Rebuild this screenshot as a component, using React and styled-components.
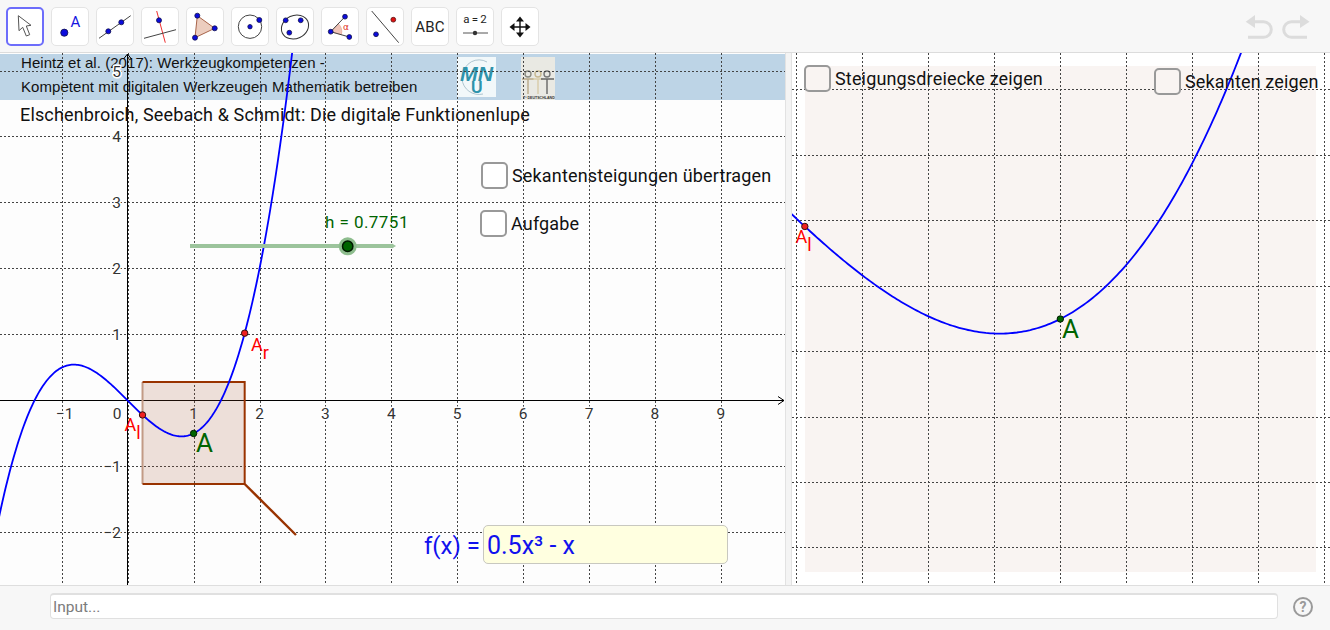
import React from 'react'
import styled, { createGlobalStyle } from 'styled-components'

const Global = createGlobalStyle`
  html, body { margin: 0; padding: 0; background: #fff; overflow: hidden; }
  body { font-family: Roboto, "Liberation Sans", sans-serif; }
`

const Page = styled.div`
  width: 1330px;
  height: 630px;
  display: flex;
  flex-direction: column;
`

const Toolbar = styled.div`
  height: 53px;
  flex: none;
  box-sizing: border-box;
  padding: 7px 20px 0 6px;
  display: flex;
  align-items: flex-start;
  gap: 7px;
  background: #f7f7f7;
  border-bottom: 1px solid #dcdcdc;
`

const ToolButton = styled.div`
  width: 38px;
  height: 39px;
  flex: none;
  box-sizing: border-box;
  display: flex;
  align-items: center;
  justify-content: center;
  background: #fff;
  border-radius: 5px;
  border: ${p => (p.$active ? '2px solid #6d6dfb' : '1px solid #e4e4e4')};
  font-size: 15px;
  color: #222;
  letter-spacing: 0.2px;
`

const ToolIcon = styled.svg`
  width: 38px;
  height: 38px;
  flex: none;
  display: block;
`

const History = styled.div`
  margin-left: auto;
  padding-top: 7px;
  display: flex;
  gap: 8px;
`

const Workspace = styled.div`
  height: 532px;
  flex: none;
  display: flex;
`

const Canvas = styled.div`
  position: relative;
  overflow: hidden;
  width: ${p => p.$width}px;
  flex: none;
  background: ${p => p.$bg};
`

const Splitter = styled.div`
  width: 7px;
  flex: none;
  box-sizing: border-box;
  background: #f4f4f4;
  border-left: 1px solid #e2e2e2;
  border-right: 1px solid #e2e2e2;
`

const Plot = styled.svg`
  position: absolute;
  left: 0;
  top: 0;
  display: block;
`

const Banner = styled.div`
  position: absolute;
  left: 0;
  top: 1px;
  width: 100%;
  height: 46px;
  box-sizing: border-box;
  padding: 1px 0 5px 21px;
  background: #bdd4e6;
  font-family: "Liberation Sans", Arial, sans-serif;
  font-size: 15px;
  letter-spacing: 0.055px;
  color: #111;
  display: flex;
  flex-direction: column;
  justify-content: space-between;
  line-height: 16px;
`

const Logo = styled.svg`
  position: absolute;
  top: 4px;
  left: ${p => p.$left}px;
  display: block;
`

const Credit = styled.div`
  position: absolute;
  left: 20px;
  top: 51px;
  font-size: 18px;
  line-height: 22px;
  letter-spacing: 0.15px;
  color: #111;
  white-space: nowrap;
`

const Option = styled.label`
  position: absolute;
  left: ${p => p.$left}px;
  top: ${p => p.$top}px;
  display: flex;
  align-items: center;
  gap: 4px;
  font-size: 18px;
  letter-spacing: 0.16px;
  color: #111;
  white-space: nowrap;
`

const OptionText = styled.span`
  padding-bottom: 1px;
`

const Box = styled.span`
  width: 27px;
  height: 27px;
  box-sizing: border-box;
  flex: none;
  border: 2px solid #999;
  border-radius: 5px;
  background: ${p => p.$bg};
`

const FormulaRow = styled.div`
  position: absolute;
  left: 424px;
  top: 472px;
  display: flex;
  align-items: center;
  gap: 3px;
  font-size: 24px;
  color: #1111ee;
  white-space: nowrap;
`

const FormulaInput = styled.div`
  width: 245px;
  height: 39px;
  box-sizing: border-box;
  padding: 2px 0 0 3px;
  display: flex;
  align-items: center;
  background: #ffffe0;
  border: 1px solid #c8c8c0;
  border-radius: 5px;
  font-size: 25px;
`

const FormulaLabel = styled.span`
  padding-top: 2px;
`

const InputBar = styled.div`
  flex: 1;
  box-sizing: border-box;
  display: flex;
  align-items: flex-start;
  padding: 7px 0 0 50px;
  background: #f7f7f7;
  border-top: 1px solid #dedede;
`

const InputField = styled.div`
  width: 1228px;
  height: 26px;
  box-sizing: border-box;
  padding-left: 2px;
  display: flex;
  align-items: center;
  background: #fff;
  border: 1px solid #e0e0e0;
  border-top-width: 2px;
  border-radius: 4px;
  font-size: 15.5px;
  color: #7c7c7c;
`

const Help = styled.svg`
  margin: 4px 0 0 15px;
  flex: none;
  display: block;
`

const BLUE = '#0b0bdc'
const DOT_STROKE = '#10104a'

const Dot = ({ x, y, r = 3, fill = BLUE, stroke = DOT_STROKE, width = 0.8 }) => (
  <circle cx={x} cy={y} r={r} fill={fill} stroke={stroke} strokeWidth={width} />
)

const tools = [
  {
    key: 'move',
    active: true,
    icon: (
      <polygon
        points="12.3,7.7 13,22.7 16.7,19.3 20.3,28 23.7,26.7 20.3,18 25,17.3"
        fill="#fff"
        stroke="#555"
        strokeWidth="1"
      />
    ),
  },
  {
    key: 'point',
    icon: (
      <>
        <Dot x={13.3} y={24.7} r={3.6} />
        <text x={19.5} y={18.7} fontFamily="Roboto, sans-serif" fontSize="15" fill="#1414e0">A</text>
      </>
    ),
  },
  {
    key: 'line',
    icon: (
      <>
        <line x1="3" y1="30.3" x2="34.7" y2="7.7" stroke="#444" strokeWidth="1" />
        <Dot x={12.3} y={23.3} r={2.5} />
        <Dot x={25.3} y={14.3} r={2.5} />
      </>
    ),
  },
  {
    key: 'perpendicular',
    icon: (
      <>
        <line x1="15.7" y1="3" x2="24.3" y2="34.7" stroke="#ee3030" strokeWidth="1" />
        <line x1="3" y1="30.3" x2="35" y2="21.7" stroke="#444" strokeWidth="1" />
        <Dot x={18} y={12.3} r={2.5} />
      </>
    ),
  },
  {
    key: 'polygon',
    icon: (
      <>
        <polygon points="11.3,7.7 28.7,20.3 9,29.7" fill="#eccdbf" stroke="#a8644a" strokeWidth="1" />
        <Dot x={11.3} y={7.7} r={2.5} />
        <Dot x={28.7} y={20.3} r={2.5} />
        <Dot x={9} y={29.7} r={2.5} />
      </>
    ),
  },
  {
    key: 'circle',
    icon: (
      <>
        <circle cx="19" cy="18.7" r="11.7" fill="none" stroke="#444" strokeWidth="1" />
        <Dot x={19} y={18.7} r={2.2} />
        <Dot x={28.3} y={12} r={2.5} />
      </>
    ),
  },
  {
    key: 'ellipse',
    icon: (
      <>
        <ellipse cx="19" cy="19" rx="14" ry="11.5" fill="none" stroke="#333" strokeWidth="1" transform="rotate(-25 19 19)" />
        <Dot x={9.7} y={12.3} r={2.4} />
        <Dot x={24.7} y={12.3} r={2.4} />
        <Dot x={13.3} y={24.7} r={2.4} />
      </>
    ),
  },
  {
    key: 'angle',
    icon: (
      <>
        <path d="M9.7 23.7 L17.3 15.7 A11 11 0 0 1 20.3 26.7 Z" fill="#f0c4b8" stroke="#e09a8a" strokeWidth="0.6" />
        <line x1="9.7" y1="23.7" x2="24" y2="8.7" stroke="#444" strokeWidth="1" />
        <line x1="9.7" y1="23.7" x2="28.3" y2="29" stroke="#444" strokeWidth="1" />
        <Dot x={9.7} y={23.7} r={2.4} />
        <Dot x={24} y={8.7} r={2.4} />
        <Dot x={28.3} y={29} r={2.4} />
        <text x={22} y={22} fontFamily="'DejaVu Sans', sans-serif" fontSize="9" fill="#e03020">α</text>
      </>
    ),
  },
  {
    key: 'reflect',
    icon: (
      <>
        <line x1="5.7" y1="3" x2="32.7" y2="34.7" stroke="#444" strokeWidth="1" />
        <Dot x={27.3} y={11.7} r={2.4} fill="#e01010" stroke="#501010" />
        <Dot x={10} y={26.3} r={2.4} />
      </>
    ),
  },
  { key: 'text', label: 'ABC' },
  {
    key: 'slider',
    icon: (
      <>
        <text x={19} y={15} textAnchor="middle" wordSpacing="-1" fontFamily="Roboto, sans-serif" fontSize="11.5" fill="#222">a = 2</text>
        <line x1="7" y1="25" x2="32" y2="25" stroke="#555" strokeWidth="1" />
        <circle cx="19" cy="25" r="2.2" fill="#333" />
      </>
    ),
  },
  {
    key: 'translate',
    icon: (
      <>
        <path d="M19 11 V27 M11 19 H27" stroke="#111" strokeWidth="1.4" />
        <path
          d="M19 8.5 L23 13.5 H15 Z M19 29.5 L23 24.5 H15 Z M8.5 19 L13.5 15 V23 Z M29.5 19 L24.5 15 V23 Z"
          fill="#111"
        />
      </>
    ),
  },
]

// f(x) = 0.5x^3 - x
const f = x => 0.5 * x * x * x - x

const curvePath = (from, to, toX, toY) => {
  const steps = 240
  let d = ''
  for (let i = 0; i <= steps; i++) {
    const x = from + ((to - from) * i) / steps
    d += `${i ? 'L' : 'M'}${toX(x).toFixed(2)} ${toY(f(x)).toFixed(2)} `
  }
  return d
}

const UNIT = 65.9
const ORIGIN_X = 127.7
const ORIGIN_Y = 400.5
const leftX = x => ORIGIN_X + x * UNIT
const leftY = y => ORIGIN_Y - y * UNIT

const ZOOM = 329.6
const rightX = x => 1060.3 + (x - 1) * ZOOM
const rightY = y => 319 - (y + 0.5) * ZOOM

const H = 0.7751
const GRID = '#444'

const GridLines = ({ xs, ys, x1, x2, y1, y2 }) => (
  <g stroke={GRID} strokeWidth="1" strokeDasharray="2 2" fill="none">
    {xs.map(x => <line key={`v${x}`} x1={x} x2={x} y1={y1} y2={y2} />)}
    {ys.map(y => <line key={`h${y}`} x1={x1} x2={x2} y1={y} y2={y} />)}
  </g>
)

const AxisLabel = ({ x, y, anchor = 'middle', children }) => (
  <text
    x={x}
    y={y}
    textAnchor={anchor}
    fontFamily="Roboto, sans-serif"
    fontSize="15.5"
    fill="#333"
    stroke="#fff"
    strokeWidth="3"
    strokeLinejoin="round"
    paintOrder="stroke"
  >
    {children}
  </text>
)

const PointName = ({ x, y, color, size = 18, sub }) => (
  <text x={x} y={y} fontFamily="Roboto, sans-serif" fontSize={size} fill={color}>
    A
    {sub && <tspan dy="8">{sub}</tspan>}
  </text>
)

const MnuLogo = () => (
  <Logo $left={457} width="39" height="40" viewBox="0 0 39 40">
    <rect width="39" height="40" fill="#f2f8fa" />
    <path d="M6 18 A16 16 0 0 1 30 5" fill="none" stroke="#9db8c4" strokeWidth="0.8" />
    <path d="M5 22 A17 17 0 0 0 26 37" fill="none" stroke="#9db8c4" strokeWidth="0.8" />
    <text x={3} y={24} fontFamily="'Liberation Sans', sans-serif" fontStyle="italic" fontWeight="700" fontSize="20" fill="#2f93ab" textLength="33" lengthAdjust="spacingAndGlyphs">MN</text>
    <text x={14} y={36} fontFamily="'Liberation Sans', sans-serif" fontWeight="700" fontSize="16" fill="#2f93ab">U</text>
  </Logo>
)

const TeeLogo = () => (
  <Logo $left={521} width="34" height="43" viewBox="0 0 34 43">
    <rect width="34" height="43" fill="#e9e9e3" />
    <g fill="none" strokeWidth="1.4">
      <circle cx="7" cy="17" r="3" stroke="#8a8a80" />
      <circle cx="17" cy="17" r="3" stroke="#c8b890" />
      <circle cx="26" cy="17" r="3" stroke="#777" />
      <path d="M1 22 H13 M7 22 V37" stroke="#b8a888" />
      <path d="M12 22 H22 M17 22 V37" stroke="#d8cba8" />
      <path d="M20 22 H33 M26 22 V37" stroke="#666" />
    </g>
    <text x={2} y={41.5} fontFamily="'Liberation Sans', sans-serif" fontWeight="700" fontSize="3.6" fill="#333">T³ DEUTSCHLAND</text>
  </Logo>
)

const leftGridX = [-1, 0, 1, 2, 3, 4, 5, 6, 7, 8, 9, 10].map(n => Math.round(leftX(n)) + 0.5)
const leftGridY = [5, 4, 3, 2, 1, -1, -2].map(n => Math.round(leftY(n) - 0.5) + 0.5)
const rightGridX = [796, 862, 928, 994, 1060, 1126, 1192, 1258, 1324].map(v => v + 0.5)
const rightGridY = [89, 155, 220, 286, 351, 417, 482, 547].map(v => v + 0.5)

const LeftPlot = () => {
  const alX = leftX(1 - H)
  const arX = leftX(1 + H)
  return (
    <Plot width="785" height="532" viewBox="0 53 785 532">
      <GridLines xs={leftGridX} ys={leftGridY} x1={0} x2={785} y1={53} y2={585} />

      <path d="M127.5 585 V54 M123.5 59 L127.5 54 L131.5 59" fill="none" stroke="#000" strokeWidth="1" />
      <path d="M0 400.5 H784 M778 396.5 L784 400.5 L778 404.5" fill="none" stroke="#000" strokeWidth="1" />

      {[5, 4, 3, 2, 1, -1, -2].map(n => (
        <AxisLabel key={n} x={121} y={leftY(n) + 5.5} anchor="end">{n < 0 ? `−${-n}` : n}</AxisLabel>
      ))}
      {[-1, 1, 2, 3, 4, 5, 6, 7, 8, 9].map(n => (
        <AxisLabel key={n} x={leftX(n) + (n < 0 ? 3 : 0)} y={418.5}>{n < 0 ? `−${-n}` : n}</AxisLabel>
      ))}
      <AxisLabel x={117} y={418.5}>0</AxisLabel>

      <rect x={alX} y="382" width={arX - alX} height="102" fill="#a0502a" fillOpacity="0.17" />
      <line x1={alX} y1="382" x2={alX} y2="484" stroke="#c29a85" strokeWidth="2" />
      <path d={`M${alX} 382 H${arX} V484 H${alX}`} fill="none" stroke="#993300" strokeWidth="2" />
      <line x1={arX} y1="484" x2="296" y2="535" stroke="#993300" strokeWidth="2.4" />

      <path d={curvePath(-2, 2.6, leftX, leftY)} fill="none" stroke="#0000ff" strokeWidth="1.8" />

      <line x1="190" y1="246" x2="393" y2="246" stroke="#9cc49c" strokeWidth="4" />
      <polygon points="392,243.5 396,246 392,248.5" fill="#9cc49c" />
      <circle cx="347.7" cy="246.3" r="9" fill="#8ebd8e" />
      <circle cx="347.7" cy="246.3" r="5.2" fill="#006400" stroke="#001a00" strokeWidth="1.5" />
      <text x={325} y={228} fontFamily="Roboto, sans-serif" fontSize="17" letterSpacing="0.45" fill="#006400">h = 0.7751</text>

      <Dot x={alX} y={leftY(f(1 - H))} r={3.2} fill="#f02020" stroke="#301010" width={1} />
      <Dot x={arX} y={leftY(f(1 + H))} r={3.2} fill="#f02020" stroke="#301010" width={1} />
      <Dot x={leftX(1)} y={leftY(-0.5)} r={3.2} fill="#006400" stroke="#001a00" width={1} />

      <PointName x={124.5} y={431} color="#ff0000" sub="l" />
      <PointName x={251} y={351} color="#ff0000" sub="r" />
      <PointName x={196} y={452} color="#006400" size={26} />
    </Plot>
  )
}

const RightPlot = () => (
  <Plot width="538" height="532" viewBox="792 53 538 532">
    <rect x="805" y="66" width="511" height="506" fill="#f9f4f2" />
    <GridLines xs={rightGridX} ys={rightGridY} x1={792} x2={1330} y1={53} y2={585} />
    <path d={curvePath(0.18, 1.8, rightX, rightY)} fill="none" stroke="#0000ff" strokeWidth="1.8" />
    <Dot x={rightX(1 - H)} y={rightY(f(1 - H))} r={3.2} fill="#f02020" stroke="#301010" width={1} />
    <Dot x={rightX(1)} y={rightY(-0.5)} r={3.2} fill="#006400" stroke="#001a00" width={1} />
    <PointName x={795.5} y={243} color="#ff0000" sub="l" />
    <PointName x={1062} y={338} color="#006400" size={26} />
  </Plot>
)

export default function App() {
  return (
    <Page>
      <Global />
      <Toolbar>
        {tools.map(t => (
          <ToolButton key={t.key} $active={t.active}>
            {t.label || <ToolIcon viewBox="0 0 38 38">{t.icon}</ToolIcon>}
          </ToolButton>
        ))}
        <History>
          <svg width="29" height="27" viewBox="0 0 29 27" fill="none" stroke="#dcdcdc" strokeWidth="3">
            <path d="M8 7.700 H18.500 A7.800 7.800 0 0 1 18.500 23.300 H3" />
            <polygon points="0.700,7.700 10,1 10,14" fill="#dcdcdc" stroke="none" />
          </svg>
          <svg width="28" height="27" viewBox="0 0 28 27" fill="none" stroke="#dcdcdc" strokeWidth="3">
            <path d="M20 7.700 H9.500 A7.800 7.800 0 0 0 9.500 23.300 H25" />
            <polygon points="27.500,7.700 18,1 18,14" fill="#dcdcdc" stroke="none" />
          </svg>
        </History>
      </Toolbar>

      <Workspace>
        <Canvas $width={785} $bg="#fdfdfd">
          <Banner>
            <div>Heintz et al. (2017): Werkzeugkompetenzen -</div>
            <div>Kompetent mit digitalen Werkzeugen Mathematik betreiben</div>
          </Banner>
          <MnuLogo />
          <TeeLogo />
          <LeftPlot />
          <Credit>Elschenbroich, Seebach &amp; Schmidt: Die digitale Funktionenlupe</Credit>
          <Option $left={481} $top={109}><Box $bg="#fff" /><OptionText>Sekantensteigungen übertragen</OptionText></Option>
          <Option $left={480} $top={157}><Box $bg="#fff" /><OptionText>Aufgabe</OptionText></Option>
          <FormulaRow>
            <FormulaLabel>f(x) =</FormulaLabel>
            <FormulaInput>0.5x³ - x</FormulaInput>
          </FormulaRow>
        </Canvas>
        <Splitter />
        <Canvas $width={538} $bg="#fff">
          <RightPlot />
          <Option $left={12} $top={12}><Box $bg="#f9f4f2" /><OptionText>Steigungsdreiecke zeigen</OptionText></Option>
          <Option $left={362} $top={15}><Box $bg="#f9f4f2" /><OptionText>Sekanten zeigen</OptionText></Option>
        </Canvas>
      </Workspace>

      <InputBar>
        <InputField>Input...</InputField>
        <Help width="20" height="20" viewBox="0 0 20 20">
          <circle cx="10" cy="10" r="9" fill="none" stroke="#9a9a9a" strokeWidth="2" />
          <text x={10} y={15} textAnchor="middle" fontFamily="Roboto, sans-serif" fontWeight="700" fontSize="14" fill="#9a9a9a">?</text>
        </Help>
      </InputBar>
    </Page>
  )
}
